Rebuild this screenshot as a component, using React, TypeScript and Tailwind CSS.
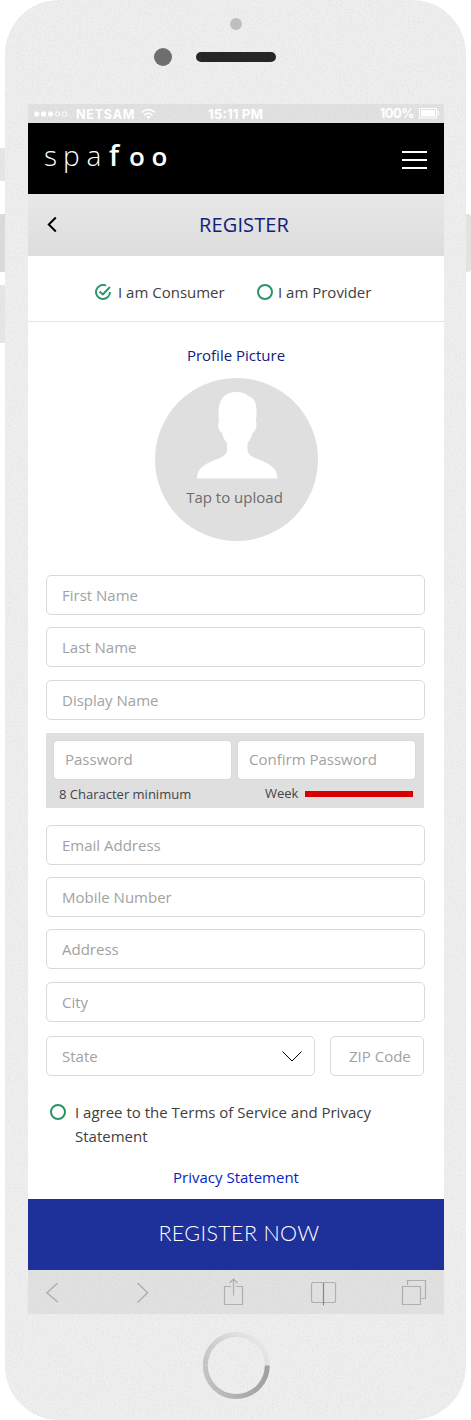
import React from "react";

const sans = "font-['Open_Sans',sans-serif]";

function Field({ label, className = "" }: { label: string; className?: string }) {
  return (
    <label
      className={`flex h-10 items-center rounded-[5px] border border-[#d9d9d9] bg-white pl-[15px] pt-px text-[15px] text-[#a2a2a2] ${className}`}
    >
      <span className="whitespace-nowrap">{label}</span>
    </label>
  );
}

function Ring() {
  return <span className="block size-4 shrink-0 rounded-full border-2 border-[#2a9468]" />;
}

function Grain() {
  return (
    <svg className="pointer-events-none absolute inset-0 size-full" aria-hidden="true">
      <filter id="grain">
        <feTurbulence type="fractalNoise" baseFrequency="0.55" numOctaves="2" seed="4" />
        <feColorMatrix values="0 0 0 0 0.45  0 0 0 0 0.45  0 0 0 0 0.45  0.8 0 0 0 -0.37" />
      </filter>
      <rect width="100%" height="100%" filter="url(#grain)" opacity="0.5" />
    </svg>
  );
}

function StatusBar() {
  return (
    <div className="relative flex h-[19px] items-center justify-between bg-[#bbbbbb]/25 pl-[5px] pr-[4px] font-['Inter',sans-serif] text-white">
      <div className="flex items-center">
        <svg width="36" height="8" viewBox="0 0 36 8" fill="white" stroke="white">
          <circle cx="3.7" cy="4" r="2.2" />
          <circle cx="10.6" cy="4" r="2.2" />
          <circle cx="17.6" cy="4" r="2.2" />
          <circle cx="24.7" cy="4" r="2.2" fill="none" />
          <circle cx="31.6" cy="4" r="2.2" fill="none" />
        </svg>
        <span className="ml-[7px] mt-px w-[61px] text-[12.5px] leading-[19px] font-bold tracking-[0.8px]">NETSAM</span>
        <svg className="ml-[4px]" width="15" height="12" viewBox="0 0 15 12" fill="none" stroke="white" strokeWidth="1.6">
          <path d="M0.9 4.4Q7.3 -1.4 13.8 4.4" />
          <path d="M3.3 7.1Q7.3 3.4 11.4 7.1" />
          <path d="M5.2 8.8Q7.3 7.2 9.5 8.8L7.3 11.2Z" fill="white" stroke="none" />
        </svg>
      </div>
      <span className="absolute left-[180px] top-px text-[13.5px] leading-[19px] font-bold whitespace-nowrap">15:11 PM</span>
      <div className="flex items-center">
        <span className="mr-[5px] text-[13px] leading-[19px] font-bold tracking-[-0.5px]">100%</span>
        <svg width="21" height="11" viewBox="0 0 21 11">
          <rect x="0.5" y="0.5" width="17" height="9.5" fill="none" stroke="white" />
          <rect x="2" y="2" width="14" height="6.5" fill="white" />
          <path d="M18 3.5h1.5v3.5H18" fill="none" stroke="white" />
        </svg>
      </div>
    </div>
  );
}

function Logo() {
  return (
    <div className="mb-[7px] flex items-baseline font-['Open_Sans',sans-serif] text-[28px] leading-[40px] text-white">
      <span className="w-[19px] font-light">s</span>
      <span className="w-[23.5px] font-light">p</span>
      <span className="w-[22.5px] font-light">a</span>
      <span className="w-[20px] font-semibold">f</span>
      <span className="w-[22.5px] text-[26px] font-semibold">o</span>
      <span className="text-[26px] font-semibold">o</span>
    </div>
  );
}

function BrowserBar() {
  return (
    <div className="h-11 bg-[#bbbbbb]/25">
      <svg width="416" height="44" viewBox="0 0 416 44" fill="none" stroke="#b2aeb0" strokeWidth="1.2">
        <path d="M29.7 13L19 22.7L29.7 32" strokeWidth="1.5" />
        <path d="M109.5 13L119.5 22.7L109.5 32.5" strokeWidth="1.5" />
        <path d="M203 16.5h-6.5v18h18v-18H208M205.5 25.5V9M201.5 13l4-4 4 4" />
        <path d="M295.500 12.500h-10q-2 0-2 2v16q0 2 2 2h10M295.500 12.500h10q2 0 2 2v16q0 2-2 2h-10" />
        <path d="M295.500 13v22.500" stroke="#858585" />
        <path d="M374.500 16.500h18v18h-18ZM379.500 15v-4.500h18v18h-4" />
      </svg>
    </div>
  );
}

export default function App() {
  return (
    <div className={`relative h-[1420px] w-[471px] overflow-hidden bg-white ${sans}`}>
      <div className="absolute -left-1 top-[148px] h-[33px] w-3 rounded-[3px] bg-[#e5e6e3]" />
      <div className="absolute -left-1 top-[214px] h-[58px] w-3 rounded-[3px] bg-[#dadada]" />
      <div className="absolute -left-1 top-[285px] h-[58px] w-3 rounded-[3px] bg-[#e5e6e3]" />
      <div className="absolute left-[462px] top-[214px] h-[58px] w-[9px] rounded-r-[3px] bg-[#e3e3e1]" />

      <div className="relative ml-[5px] h-[1420px] w-[461px] overflow-hidden rounded-[54px] bg-[#eeeeee]">
        <Grain />
        <div className="relative flex flex-col">
          <div className="h-[104px]">
            <svg width="461" height="104" viewBox="0 0 461 104">
              <circle cx="231" cy="24" r="6" fill="#bfbfbf" />
              <circle cx="158" cy="57" r="9" fill="#6d6e70" />
              <rect x="191" y="52" width="80" height="10" rx="5" fill="#262626" />
            </svg>
          </div>

          <div className="ml-[23px] flex w-[416px] flex-col">
            <StatusBar />
            <div className="flex h-[71px] items-center justify-between bg-black pl-4 pr-[17px]">
              <Logo />
              <div className="mt-[3px] flex flex-col gap-[6px]">
                <span className="h-0.5 w-[25px] bg-white" />
                <span className="h-0.5 w-[25px] bg-white" />
                <span className="h-0.5 w-[25px] bg-white" />
              </div>
            </div>

            <div className="relative flex h-[62px] items-center justify-center bg-linear-to-b from-[#e8e8e8] to-[#dddddd]">
              <svg className="absolute left-[19px] top-[22px]" width="11" height="17" viewBox="0 0 11 17" fill="none" stroke="black" strokeWidth="2">
                <path d="M8.800 1.500L1.800 8.500L8.800 15.500" />
              </svg>
              <h1 className="ml-4 text-[20px] tracking-[0.1px] text-[#12207c]">REGISTER</h1>
            </div>

            <div className="flex h-[66px] items-center border-b border-[#e4e4e4] bg-white pl-[67px] pt-[7px] text-[15px] text-[#404040]">
              <svg className="mr-[6px] shrink-0" width="17" height="16" viewBox="0 0 17 16" fill="none" stroke="#2a9468" strokeWidth="1.900">
                <path d="M11 1.600A7 7 0 1 0 15 8" />
                <path d="M4.500 7.500L7.800 10.500L15 3" />
              </svg>
              <span className="w-[139px] whitespace-nowrap">I am Consumer</span>
              <Ring />
              <span className="ml-[5px] whitespace-nowrap">I am Provider</span>
            </div>

            <div className="h-[877px] bg-white px-[18px]">
              <h2 className="pt-[22px] text-center text-[15px] leading-[22px] text-[#12207c]">Profile Picture</h2>
              <div className="ml-[109px] mt-[12px] flex h-[163px] w-[163px] flex-col items-center rounded-full bg-[#dfdfdf]">
                <svg className="ml-[2px] mt-[14px]" width="81" height="87" viewBox="0 0 81 87" fill="white">
                  <path d="M0 86.500C0 74 13 70 22 66.500C28 64 30 61 30 58V51C27.500 48 26 45 25 41C21.500 39 20 33 22 29.500C20 9 25 0 40 0C45 0 48 1 51 4C59 6 60.500 14 59 29C60.500 34 58.500 39 55.500 41C54.500 45 53 48 50.500 51V58C50.500 61 53 64 59 66.500C68 70 80.500 74 80.500 86.500Z" />
                </svg>
                <span className="mr-[4px] mt-[7px] text-[15px] leading-[22px] text-[#6c6c6c]">Tap to upload</span>
              </div>

              <div className="mt-[34px] flex w-[379px] flex-col">
                <Field label="First Name" />
                <Field label="Last Name" className="mt-3" />
                <Field label="Display Name" className="mt-[13px]" />
              </div>

              <div className="mt-[13px] h-[75px] w-[378px] bg-[#dfdfdf] pl-[7px] pt-[7px] text-[13px] text-[#444]">
                <div className="flex gap-[5px]">
                  <Field label="Password" className="w-[179px] !pl-[11px] !pt-0 !pb-[2px]" />
                  <Field label="Confirm Password" className="w-[179px] !pl-[11px] !pt-0 !pb-[2px]" />
                </div>
                <div className="flex items-start pl-1.5 leading-[18px]">
                  <span className="mt-[5px] w-[206px] whitespace-nowrap">8 Character minimum</span>
                  <span className="mt-[4px] w-[40px]">Week</span>
                  <span className="mt-[11px] h-[6px] w-[108px] bg-[#d80000]" />
                </div>
              </div>

              <div className="mt-[17px] flex w-[379px] flex-col">
                <Field label="Email Address" />
                <Field label="Mobile Number" className="mt-3" />
                <Field label="Address" className="mt-3" />
                <Field label="City" className="mt-[13px]" />
              </div>
              <div className="mt-[14px] flex justify-between pr-0.5">
                <div className="flex h-10 w-[269px] items-center justify-between rounded-[5px] border border-[#d9d9d9] pl-[15px] pr-3 text-[15px] text-[#a2a2a2]">
                  <span className="pt-px">State</span>
                  <svg width="20" height="11" viewBox="0 0 20 11" fill="none" stroke="black">
                    <path d="M0.500 0.500L10 10L19.500 0.500" />
                  </svg>
                </div>
                <Field label="ZIP Code" className="w-[94px] !pl-[18px]" />
              </div>

              <div className="mt-[25px] flex pl-1 text-[15px] leading-[24px] text-[#404040]">
                <span className="mt-[3px]"><Ring /></span>
                <p className="-mt-px ml-[9px] whitespace-nowrap">
                  I agree to the Terms of Service and Privacy
                  <br />
                  Statement
                </p>
              </div>
              <p className="mt-[18px] text-center text-[15px] leading-[22px] text-[#0a1ec2]">Privacy Statement</p>
            </div>

            <button className="flex h-[71px] items-center justify-center bg-[#1e3099] pb-[2px] pl-[6px] font-['Lato',sans-serif] text-[21.500px] tracking-[0.35px] font-light text-white">
              REGISTER NOW
            </button>
            <BrowserBar />
          </div>

          <div className="flex h-[106px]">
            <svg width="461" height="106" viewBox="0 0 461 106" fill="none" strokeWidth="5">
              <defs>
                <linearGradient id="upper" x1="0" y1="1" x2="1" y2="0.600">
                  <stop offset="0" stopColor="#c2c2c2" />
                  <stop offset="1" stopColor="#e6e7e3" />
                </linearGradient>
                <linearGradient id="lower" x1="0" y1="0" x2="1" y2="0">
                  <stop offset="0" stopColor="#c2c2c0" />
                  <stop offset="1" stopColor="#a0a0a0" />
                </linearGradient>
              </defs>
              <path d="M200.300 51.500A31 31 0 0 1 262.300 51.500" stroke="url(#upper)" />
              <path d="M200.300 51.500A31 31 0 0 0 262.300 51.500" stroke="url(#lower)" />
            </svg>
          </div>
        </div>
      </div>
    </div>
  );
}
